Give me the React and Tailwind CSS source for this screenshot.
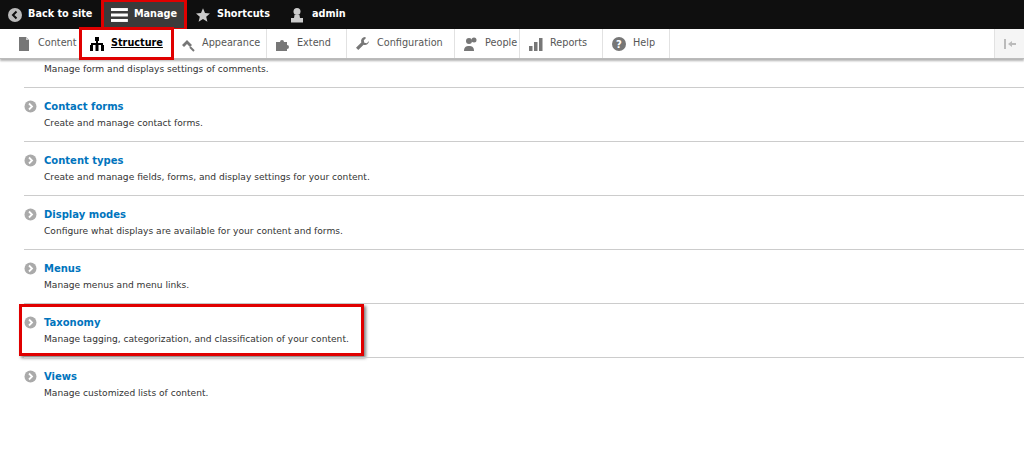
import React from 'react';

const items = [
  { title: 'Contact forms', desc: 'Create and manage contact forms.' },
  { title: 'Content types', desc: 'Create and manage fields, forms, and display settings for your content.' },
  { title: 'Display modes', desc: 'Configure what displays are available for your content and forms.' },
  { title: 'Menus', desc: 'Manage menus and menu links.' },
  { title: 'Taxonomy', desc: 'Manage tagging, categorization, and classification of your content.', hl: true },
  { title: 'Views', desc: 'Manage customized lists of content.' },
];

const Ico = ({ children }) => (
  <svg width="16" height="16" viewBox="0 0 16 16" fill="#777" className="flex-none">{children}</svg>
);

const tabs = [
  { label: 'Content', w: 'w-[73px]', icon: <Ico><path d="M3 1h7l3 3v11H3z" /><path d="M10 1v3h3" fill="#ccc" /></Ico> },
  { label: 'Structure', w: 'w-[91px]', active: true, icon: <svg width="16" height="16" viewBox="0 0 16 16" fill="#000" className="flex-none"><rect x="6" y="1" width="4" height="4" /><rect x="7" y="5" width="2" height="3" /><rect x="2" y="7" width="12" height="2" /><rect x="1" y="9" width="3" height="6" /><rect x="6.5" y="9" width="3" height="6" /><rect x="12" y="9" width="3" height="6" /></svg> },
  { label: 'Appearance', w: 'w-[95px]', icon: <Ico><path d="M2 9l5-5 5 5-2 2-3-3-3 3z" /><path d="M10 11l4 4" stroke="#777" strokeWidth="2" /></Ico> },
  { label: 'Extend', w: 'w-[80px]', icon: <Ico><path d="M1 6h4a2 2 0 1 1 4 0h3v3a2 2 0 1 1 0 4v2H1z" /></Ico> },
  { label: 'Configuration', w: 'w-[108px]', icon: <Ico><path d="M10 1a4 4 0 0 0-3.7 5.4L1 11.7 3.3 14l5.3-5.3A4 4 0 0 0 14 5l-2.2 2.2-2.5-.5-.5-2.5L11 2a4 4 0 0 0-1-1z" /></Ico> },
  { label: 'People', w: 'w-[65px]', icon: <Ico><circle cx="6" cy="5" r="3" /><path d="M1 15c0-4 2-5 5-5s5 1 5 5z" /><circle cx="11" cy="4" r="2.5" /></Ico> },
  { label: 'Reports', w: 'w-[83px]', icon: <Ico><rect x="1" y="10" width="3.5" height="5" /><rect x="6" y="6" width="3.5" height="9" /><rect x="11" y="2" width="3.5" height="13" /></Ico> },
  { label: 'Help', w: 'w-[67px]', icon: <Ico><circle cx="8" cy="8" r="7" /><text x="8" y="12" fontSize="10" fontWeight="bold" textAnchor="middle" fill="#fff" fontFamily="DejaVu Sans">?</text></Ico> },
];

export default function App() {
  const font = { fontFamily: '"DejaVu Sans", Verdana, sans-serif' };
  return (
    <div className="w-[1024px] h-[474px] bg-white overflow-hidden relative" style={font}>
      {/* top toolbar */}
      <div className="h-[29px] bg-[#0f0f0f] flex items-center text-white text-[9.7px] font-bold">
        <div className="flex items-center gap-[6px] px-[8px] h-full w-[103px]">
          <svg width="14" height="14" viewBox="0 0 14 14"><circle cx="7" cy="7" r="7" fill="#bbb" /><path d="M8.5 3.5L5 7l3.5 3.5" stroke="#0f0f0f" strokeWidth="2" fill="none" /></svg>
          Back to site
        </div>
        <div className="h-[28px] flex items-center gap-[6px] px-[8px] bg-[#3b3b3b] outline-[3px] outline-[#e00000] -outline-offset-[1px] w-[82px]">
          <svg width="17" height="16" viewBox="0 0 17 16" fill="#fff"><rect y="1" width="17" height="3" /><rect y="6.5" width="17" height="3" /><rect y="12" width="17" height="3" /></svg>
          Manage
        </div>
        <div className="flex items-center gap-[6px] px-[10px] h-full">
          <svg width="16" height="16" viewBox="0 0 24 24" fill="#ccc"><path d="M12 2l3 7 7.5.6-5.7 5 1.8 7.4L12 18l-6.6 4 1.8-7.4-5.7-5L9 9z" /></svg>
          Shortcuts
        </div>
        <div className="flex items-center gap-[8px] px-[10px] h-full">
          <svg width="14" height="16" viewBox="0 0 14 15" fill="#ccc"><circle cx="7" cy="4" r="3.5" /><path d="M4.5 7.5h5l.5 3h3V15H1v-4.5h3z" /></svg>
          admin
        </div>
      </div>
      {/* tray */}
      <div className="h-[30px] bg-white flex items-stretch text-[9.7px] text-[#565656] shadow-[0_2px_2px_rgba(0,0,0,0.3)] border-b border-[#bbb] relative z-10">
        <div className="w-[8px] flex-none" />
        {tabs.map((t) => (
          <div
            key={t.label}
            className={`${t.w} flex-none flex items-center gap-[6px] pl-[8px] ${t.active ? 'outline-[3px] outline-[#e00000] -outline-offset-[1px] text-black font-bold underline' : 'border-r border-[#e2e2e2]'}`}
          >
            {t.icon}
            {t.label}
          </div>
        ))}
        <div className="flex-1" />
        <div className="w-[30px] border-l border-[#e2e2e2] flex items-center justify-center bg-[#f5f5f5]">
          <svg width="14" height="10" viewBox="0 0 14 10" fill="#bbb"><rect x="1" y="0" width="2" height="10" /><path d="M5 5l4-3v2h4v2H9v2z" /></svg>
        </div>
      </div>
      {/* content */}
      <div className="pl-[24px]">
        <div className="pl-[20px] h-[28px] pt-[4px] text-[9.1px] text-[#333]">Manage form and displays settings of comments.</div>
        {items.map((it) => (
          <div key={it.title} className="border-t border-[#ccc] h-[54px] relative">
            {it.hl && (
              <div className="absolute left-[-5px] top-[0px] w-[345px] h-[52px] border-[3px] border-[#e00000] shadow-[2px_2px_3px_rgba(0,0,0,0.5)]" />
            )}
            <div className="flex items-center gap-[7px] pt-[11px]">
              <svg width="13" height="13" viewBox="0 0 13 13"><circle cx="6.5" cy="6.5" r="6" fill="#aaa" /><path d="M5 3.5l3 3-3 3" stroke="#fff" strokeWidth="1.8" fill="none" /></svg>
              <span className="text-[10px] font-bold text-[#0074bd]">{it.title}</span>
            </div>
            <div className="pl-[20px] pt-[3px] text-[9.1px] text-[#333]">{it.desc}</div>
          </div>
        ))}
      </div>
    </div>
  );
}
